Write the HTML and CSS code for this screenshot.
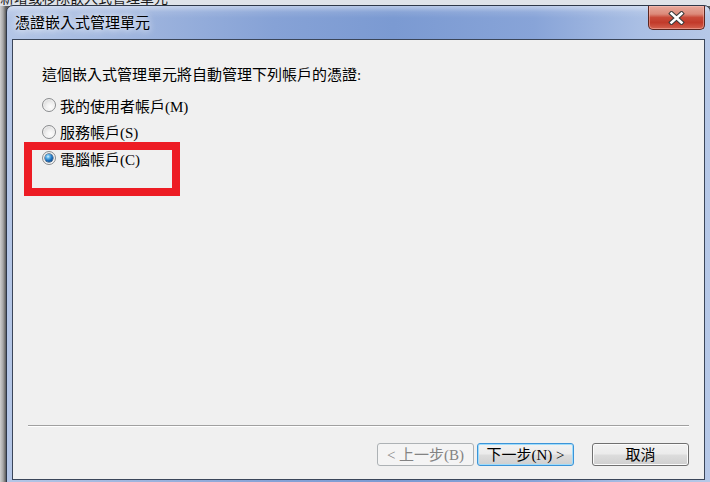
FILE: index.html
```html
<!DOCTYPE html>
<html lang="zh-Hant">
<head>
<meta charset="utf-8">
<title>憑證嵌入式管理單元</title>
<link rel="stylesheet" href="styles.css">
</head>
<body>
<div class="desktop">
  <div class="back-title">新增或移除嵌入式管理單元</div>
  <div class="dialog">
    <div class="titlebar">
      <div class="title">憑證嵌入式管理單元</div>
      <div class="close">
        <svg width="17" height="14" viewBox="0 0 17 14">
          <path d="M3.5 2.5 L13.5 11.5 M13.5 2.5 L3.5 11.5" stroke="#3a3a3a" stroke-width="4.6" stroke-linecap="square" fill="none"/>
          <path d="M3.5 2.5 L13.5 11.5 M13.5 2.5 L3.5 11.5" stroke="#ffffff" stroke-width="2.6" stroke-linecap="square" fill="none"/>
        </svg>
      </div>
    </div>
    <div class="client">
      <p class="prompt">這個嵌入式管理單元將自動管理下列帳戶的憑證:</p>
      <div class="options">
        <div class="opt"><span class="radio"></span>我的使用者帳戶(M)</div>
        <div class="opt"><span class="radio"></span>服務帳戶(S)</div>
        <div class="opt"><span class="radio checked"></span>電腦帳戶(C)</div>
      </div>
      <div class="sep"></div>
      <div class="buttons">
        <div class="btn disabled">&lt; 上一步(B)</div>
        <div class="btn default">下一步(N) &gt;</div>
        <div class="btn cancel">取消</div>
      </div>
    </div>
  </div>
  <div class="annot"></div>
</div>
</body>
</html>
```

FILE: styles.css
```css
html, body {
  margin: 0;
  padding: 0;
}
body {
  width: 710px;
  height: 482px;
  overflow: hidden;
  font-family: "Liberation Serif", "Noto Sans CJK TC", serif;
}
.desktop {
  position: relative;
  width: 710px;
  height: 482px;
  overflow: hidden;
  background: linear-gradient(to right, #cfcfcf 0, #a8a8a8 3px, #5a5a5a 6px);
}
.back-title {
  position: absolute;
  left: -4px;
  top: -12px;
  font-family: "Noto Sans CJK TC", sans-serif;
  font-size: 14px;
  line-height: 18px;
  color: #1a1a1a;
  background: #dfe3e9;
  width: 720px;
  padding-left: 4px;
}
.dialog {
  position: absolute;
  left: 6px;
  top: 5px;
  width: 705px;
  height: 481px;
  box-sizing: border-box;
  border: 1px solid #2e3849;
  border-radius: 7px 7px 0 0;
  display: flex;
  flex-direction: column;
  padding: 0 5px 5px 5px;
  background:
    linear-gradient(to bottom, rgba(255,255,255,0.45) 0, rgba(255,255,255,0.1) 6px, rgba(255,255,255,0) 12px),
    linear-gradient(to right, #b4c6e6 0%, #9fb5de 18%, #86a2d6 38%, #7b9ad2 55%, #88a4d8 75%, #aabfe4 90%, #b6c8e7 100%);
}
.titlebar {
  height: 33px;
  margin: 0 -5px;
  padding-left: 8px;
  display: flex;
  justify-content: space-between;
  align-items: flex-start;
  flex-shrink: 0;
}
.title {
  font-family: "Noto Sans CJK TC", sans-serif;
  font-size: 15px;
  line-height: 32px;
  color: #000;
  text-shadow: 0 0 6px rgba(255,255,255,0.9), 0 0 10px rgba(255,255,255,0.7);
}
.close {
  width: 57px;
  height: 24px;
  box-sizing: border-box;
  margin-right: 5px;
  border: 1px solid #5b2620;
  border-top: none;
  border-radius: 0 0 5px 5px;
  display: flex;
  align-items: center;
  justify-content: center;
  background: linear-gradient(to bottom, #e7a89b 0%, #dc8a7a 35%, #c94a39 50%, #c23a2a 72%, #d4624f 100%);
  box-shadow: inset 0 0 0 1px rgba(255,200,190,0.45);
}
.close svg {
  display: block;
}
.client {
  flex: 1;
  border: 1px solid #3b4659;
  background: #f0f0f0;
  display: flex;
  flex-direction: column;
  padding: 25px 15px 13px 15px;
  font-size: 15px;
  color: #000;
}
.prompt {
  margin: 0;
  padding-left: 14px;
  line-height: 20px;
}
.options {
  margin-top: 7px;
  padding-left: 14px;
}
.opt {
  height: 26.5px;
  display: flex;
  align-items: center;
}
.radio {
  position: relative;
  width: 14px;
  height: 14px;
  box-sizing: border-box;
  border-radius: 50%;
  border: 1px solid #8a8c8e;
  margin-right: 4px;
  background: radial-gradient(circle at 60% 65%, #fdfdfd 0%, #f1f1f1 35%, #d9d9d9 75%, #c2c2c2 100%);
  box-shadow: inset 0 0 0 1px rgba(255,255,255,0.6);
}
.radio.checked::after {
  content: "";
  position: absolute;
  left: 2px;
  top: 2px;
  width: 8px;
  height: 8px;
  border-radius: 50%;
  background: radial-gradient(circle at 38% 32%, #d8f2ff 0%, #5fb4ea 25%, #1b6bb8 55%, #0a3566 100%);
  box-shadow: 0 0 0 0.5px #0d2e52;
}
.sep {
  margin-top: auto;
  height: 1px;
  background: #a0a0a0;
  border-bottom: 1px solid #ffffff;
}
.buttons {
  margin-top: 16px;
  display: flex;
  justify-content: flex-end;
}
.btn {
  width: 97px;
  height: 23px;
  box-sizing: border-box;
  border: 1px solid #707070;
  border-radius: 3px;
  display: flex;
  align-items: center;
  justify-content: center;
  font-size: 15px;
  line-height: 20px;
  color: #000;
  background: linear-gradient(to bottom, #f2f2f2 0%, #ebebeb 48%, #dddddd 52%, #cfcfcf 100%);
  box-shadow: inset 0 0 0 1px #fbfbfb;
}
.btn.disabled {
  border-color: #adb2b5;
  background: #f4f4f4;
  color: #838383;
  box-shadow: none;
}
.btn.default {
  margin-left: 3px;
  border-color: #3c94d8;
  box-shadow: inset 0 0 0 1px #9fdcfb;
}
.btn.cancel {
  margin-left: 18px;
}
.annot {
  position: absolute;
  left: 24px;
  top: 142px;
  width: 156px;
  height: 54px;
  box-sizing: border-box;
  border: 8px solid #ed1c24;
}
```
